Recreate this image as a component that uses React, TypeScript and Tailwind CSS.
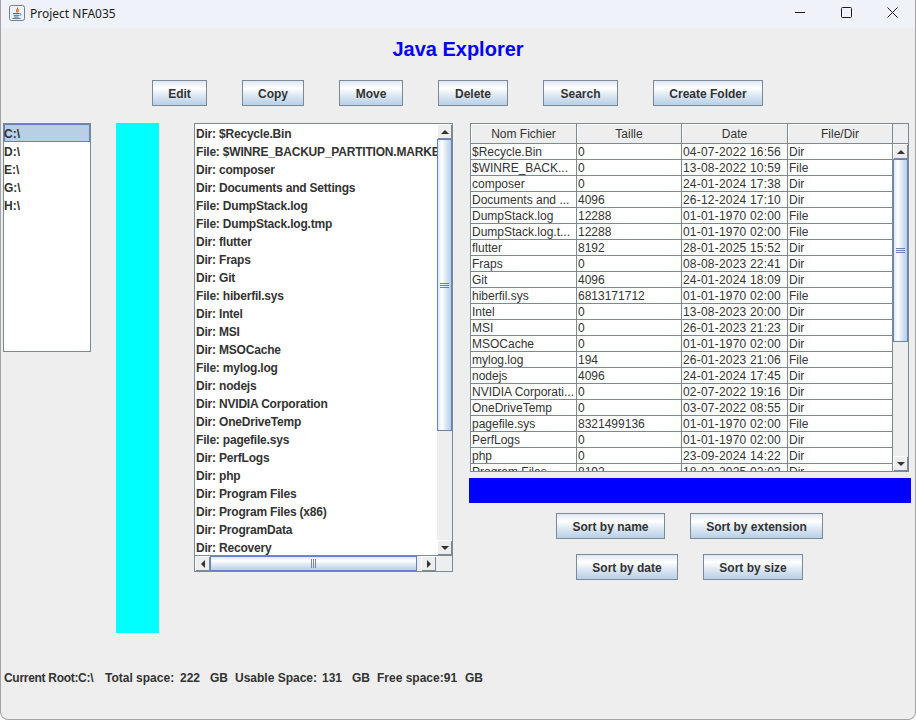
const drives = ["C:\\", "D:\\", "E:\\", "G:\\", "H:\\"]

const listItems = [
  "Dir: $Recycle.Bin",
  "File: $WINRE_BACKUP_PARTITION.MARKER",
  "Dir: composer",
  "Dir: Documents and Settings",
  "File: DumpStack.log",
  "File: DumpStack.log.tmp",
  "Dir: flutter",
  "Dir: Fraps",
  "Dir: Git",
  "File: hiberfil.sys",
  "Dir: Intel",
  "Dir: MSI",
  "Dir: MSOCache",
  "File: mylog.log",
  "Dir: nodejs",
  "Dir: NVIDIA Corporation",
  "Dir: OneDriveTemp",
  "File: pagefile.sys",
  "Dir: PerfLogs",
  "Dir: php",
  "Dir: Program Files",
  "Dir: Program Files (x86)",
  "Dir: ProgramData",
  "Dir: Recovery",
]

const rows = [
  ["$Recycle.Bin", "0", "04-07-2022 16:56", "Dir"],
  ["$WINRE_BACK...", "0", "13-08-2022 10:59", "File"],
  ["composer", "0", "24-01-2024 17:38", "Dir"],
  ["Documents and ...", "4096", "26-12-2024 17:10", "Dir"],
  ["DumpStack.log", "12288", "01-01-1970 02:00", "File"],
  ["DumpStack.log.t...", "12288", "01-01-1970 02:00", "File"],
  ["flutter", "8192", "28-01-2025 15:52", "Dir"],
  ["Fraps", "0", "08-08-2023 22:41", "Dir"],
  ["Git", "4096", "24-01-2024 18:09", "Dir"],
  ["hiberfil.sys", "6813171712", "01-01-1970 02:00", "File"],
  ["Intel", "0", "13-08-2023 20:00", "Dir"],
  ["MSI", "0", "26-01-2023 21:23", "Dir"],
  ["MSOCache", "0", "01-01-1970 02:00", "Dir"],
  ["mylog.log", "194", "26-01-2023 21:06", "File"],
  ["nodejs", "4096", "24-01-2024 17:45", "Dir"],
  ["NVIDIA Corporati...", "0", "02-07-2022 19:16", "Dir"],
  ["OneDriveTemp", "0", "03-07-2022 08:55", "Dir"],
  ["pagefile.sys", "8321499136", "01-01-1970 02:00", "File"],
  ["PerfLogs", "0", "01-01-1970 02:00", "Dir"],
  ["php", "0", "23-09-2024 14:22", "Dir"],
  ["Program Files", "8192", "18-02-2025 02:02", "Dir"],
]

const JavaButton = ({ label, width }: { label: string; width: string }) => (
  <button
    className={`${width} h-[26px] shrink-0 border border-[#7a8a99] bg-[linear-gradient(to_bottom,#dde8f3,#ffffff_30%,#dde8f3_60%,#b8cfe5)] pt-px pl-px text-xs font-bold text-[#333333]`}
  >
    {label}
  </button>
)

const Arrow = ({ dir }: { dir: "up" | "down" | "left" | "right" }) => {
  const points = {
    up: "4,0 0,4 8,4",
    down: "0,0 8,0 4,4",
    left: "4,0 4,8 0,4",
    right: "0,0 4,4 0,8",
  }[dir]
  const vertical = dir === "up" || dir === "down"
  return (
    <svg width={vertical ? 8 : 4} height={vertical ? 4 : 8} fill="#333333">
      <polygon points={points} />
    </svg>
  )
}

const ArrowButton = ({ dir }: { dir: "up" | "down" | "left" | "right" }) => (
  <div className="flex h-[15px] w-[15px] shrink-0 items-center justify-center border-t border-l border-t-white border-l-white bg-[#eeeeee] shadow-[inset_-1px_-1px_0_#7a8a99]">
    <Arrow dir={dir} />
  </div>
)

const VScrollBar = ({ thumb }: { thumb: string }) => (
  <div className="flex h-full w-[15px] shrink-0 flex-col bg-[#eeeeee]">
    <ArrowButton dir="up" />
    <div
      className={`${thumb} flex w-[15px] shrink-0 flex-col items-center justify-center gap-px border border-[#6382bf] bg-[linear-gradient(to_right,#dde8f3,#ffffff_30%,#dde8f3_60%,#b8cfe5)]`}
    >
      <div className="h-px w-[9px] bg-[#6382bf]" />
      <div className="h-px w-[9px] bg-[#6382bf]" />
      <div className="h-px w-[9px] bg-[#6382bf]" />
    </div>
    <div className="flex-1" />
    <ArrowButton dir="down" />
  </div>
)

const HScrollBar = () => (
  <div className="flex h-[15px] flex-1 items-stretch bg-[#eeeeee]">
    <ArrowButton dir="left" />
    <div className="flex w-[207px] shrink-0 items-center justify-center gap-px border border-[#6382bf] bg-[linear-gradient(to_bottom,#dde8f3,#ffffff_30%,#dde8f3_60%,#b8cfe5)]">
      <div className="h-[9px] w-px bg-[#7a8a99]" />
      <div className="h-[9px] w-px bg-[#7a8a99]" />
      <div className="h-[9px] w-px bg-[#7a8a99]" />
    </div>
    <div className="w-[4px]" />
    <ArrowButton dir="right" />
  </div>
)

const columns = ["w-[106px]", "w-[105px]", "w-[106px]", "w-[105px]"]
const headers = ["Nom Fichier", "Taille", "Date", "File/Dir"]

const App = () => {
  return (
    <div className="flex h-[720px] w-[916px] flex-col overflow-hidden rounded-b-lg border-x border-b border-[#a3a3a3] bg-[#eeeeee] font-['Liberation_Sans',Arial,sans-serif] text-xs text-[#333333]">
      {/* Window title bar */}
      <div className="flex h-[28px] shrink-0 items-center justify-between bg-[#f0f2f9]">
        <div className="flex items-center pl-[8px]">
          <svg width="16" height="16" viewBox="0 0 16 16" className="mb-[3px]">
            <rect x="0.5" y="0.5" width="15" height="15" rx="2" fill="#eef2f7" stroke="#6f8093" />
            <path d="M8.5 2.5c1 1.5-1.8 2.4-.8 4 .3.5.6.8.7 1.2M10 4.5c-1.4.7-1.2 1.6-.7 2.5" fill="none" stroke="#d9631e" strokeWidth="1.1" />
            <path d="M4 8.5h6.5M4.5 10.3h5.5M5 12h4.5M3.5 13.4h8" fill="none" stroke="#4d7191" strokeWidth="1" />
            <path d="M10.5 8.7c2-.5 2 1.7 0 2" fill="none" stroke="#4d7191" strokeWidth="0.9" />
          </svg>
          <span className="ml-[5px] font-['Noto_Sans',sans-serif] text-xs text-[#1b1b1b]">Project NFA035</span>
        </div>
        <div className="flex">
          <div className="flex h-[28px] w-[46px] items-center justify-center">
            <svg width="10" height="10" className="mb-[4px]" fill="none" stroke="#1b1b1b">
              <path d="M0 5.5h10" />
            </svg>
          </div>
          <div className="flex h-[28px] w-[46px] items-center justify-center">
            <svg width="11" height="11" className="mb-[4px]" fill="none" stroke="#1b1b1b">
              <rect x="0.5" y="0.5" width="10" height="10" rx="1" />
            </svg>
          </div>
          <div className="flex h-[28px] w-[46px] items-center justify-center">
            <svg width="11" height="11" className="mb-[4px]" fill="none" stroke="#1b1b1b">
              <path d="M0.5 0.5l10 10M10.5 0.5l-10 10" />
            </svg>
          </div>
        </div>
      </div>

      {/* Heading */}
      <div className="flex h-[42px] shrink-0 items-center justify-center text-xl font-bold text-[#0000ff]">
        Java Explorer
      </div>

      {/* Toolbar */}
      <div className="mt-[10px] flex shrink-0 justify-center gap-[35px] pr-[2px]">
        <JavaButton label="Edit" width="w-[55px]" />
        <JavaButton label="Copy" width="w-[62px]" />
        <JavaButton label="Move" width="w-[64px]" />
        <JavaButton label="Delete" width="w-[70px]" />
        <JavaButton label="Search" width="w-[75px]" />
        <JavaButton label="Create Folder" width="w-[110px]" />
      </div>

      {/* Main content */}
      <div className="mt-[17px] flex h-[510px] shrink-0 items-start pl-[2px]">
        <div className="h-[229px] w-[88px] shrink-0 border border-[#7a8a99] bg-white font-bold">
          {drives.map((drive, i) => (
            <div
              key={drive}
              className={
                i === 0
                  ? "flex h-[18px] items-center bg-[#b8cfe5] pt-px shadow-[inset_0_0_0_1px_#6382bf]"
                  : "flex h-[18px] items-center pt-px"
              }
            >
              {drive}
            </div>
          ))}
        </div>

        <div className="ml-[25px] h-[510px] w-[43px] shrink-0 bg-[#00ffff]" />

        <div className="ml-[35px] flex h-[449px] w-[259px] shrink-0 flex-col border border-[#7a8a99] bg-white">
          <div className="flex h-[431px] shrink-0">
            <div className="w-[243px] overflow-hidden font-bold tracking-[-0.2px]">
              {listItems.map((item) => (
                <div key={item} className="flex h-[18px] items-center whitespace-nowrap pt-px pl-px">
                  {item}
                </div>
              ))}
            </div>
            <VScrollBar thumb="h-[292px]" />
          </div>
          <div className="flex border-t border-[#7a8a99]">
            <HScrollBar />
            <div className="h-[15px] w-[15px] bg-[#eeeeee]" />
          </div>
        </div>

        <div className="ml-[16px] flex w-[442px] shrink-0 flex-col">
          <div className="ml-px h-[349px] w-[439px] border border-[#7a8a99] bg-white">
            <div className="flex h-[20px] border-b border-[#7a8a99] bg-[#eeeeee]">
              {headers.map((header, i) => (
                <div
                  key={header}
                  className={`${columns[i]} flex items-center justify-center border-r border-[#7a8a99] shadow-[inset_1px_1px_0_#ffffff]`}
                >
                  {header}
                </div>
              ))}
            </div>
            <div className="flex h-[327px]">
              <div className="w-[422px] overflow-hidden">
                {rows.map((row) => (
                  <div key={row[0]} className="flex h-[16px] border-b border-[#7a8a99]">
                    {row.map((cell, i) => (
                      <div
                        key={i}
                        className={`${columns[i]} flex items-center overflow-hidden border-r border-[#7a8a99] pl-px whitespace-nowrap ${i === 2 ? "tracking-[0.2px]" : ""}`}
                      >
                        {cell}
                      </div>
                    ))}
                  </div>
                ))}
              </div>
              <VScrollBar thumb="h-[183px]" />
            </div>
          </div>

          <div className="mt-[6px] h-[25px] w-[442px] bg-[#0000ff]" />

          <div className="mt-[10px] flex justify-center gap-[25px] pr-[2px]">
            <JavaButton label="Sort by name" width="w-[109px]" />
            <JavaButton label="Sort by extension" width="w-[133px]" />
          </div>
          <div className="mt-[15px] flex justify-center gap-[25px] pr-[2px]">
            <JavaButton label="Sort by date" width="w-[102px]" />
            <JavaButton label="Sort by size" width="w-[100px]" />
          </div>
        </div>
      </div>

      {/* Status line */}
      <div className="mt-[37px] flex h-[16px] items-center pl-[3px] font-bold whitespace-nowrap">
        <span className="w-[101px] tracking-[-0.3px]">Current Root:C:\</span>
        <span className="w-[75px]">Total space:</span>
        <span className="w-[30px]">222</span>
        <span className="w-[25px]">GB</span>
        <span className="w-[87px]">Usable Space:</span>
        <span className="w-[30px]">131</span>
        <span className="w-[25px]">GB</span>
        <span className="w-[88px]">Free space:91</span>
        <span>GB</span>
      </div>
    </div>
  )
}

export default App
